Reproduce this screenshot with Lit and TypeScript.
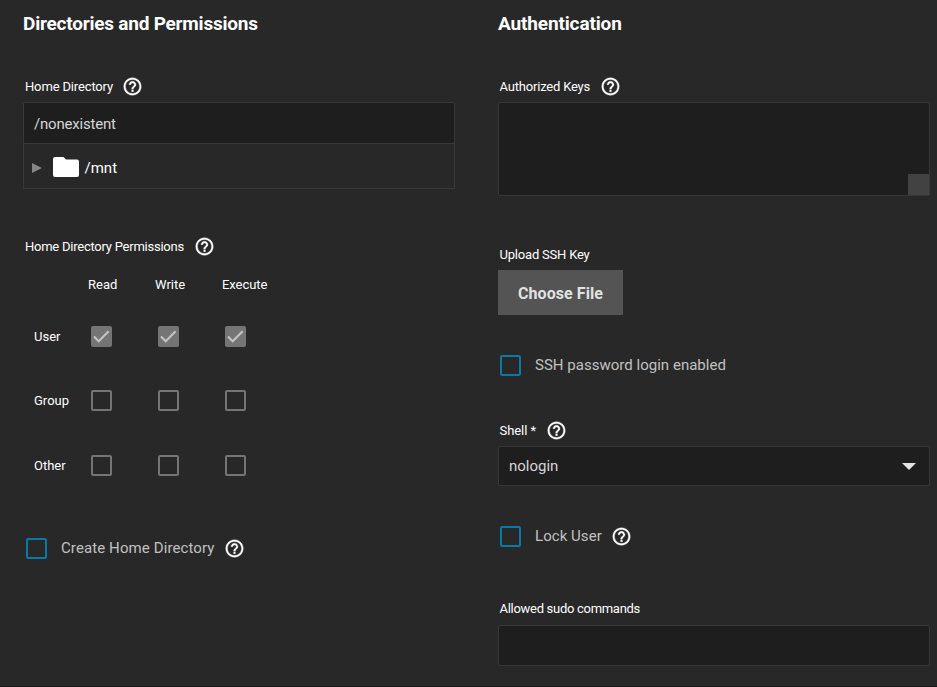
import { LitElement, html, css, svg, nothing } from "lit";
import { customElement, property } from "lit/decorators.js";
import { classMap } from "lit/directives/class-map.js";
import { styleMap } from "lit/directives/style-map.js";

/** Text run with its own tracking, in pixels. */
const tracked = (text: string, tracking = 0) =>
  html`<span class="text" style=${styleMap({ letterSpacing: `${tracking}px` })}>${text}</span>`;

@customElement("help-icon")
export class HelpIcon extends LitElement {
  static styles = css`
    :host { display: block; width: 21px; height: 21px; flex: none; }
    svg { display: block; width: 21px; height: 21px; fill: #fff; stroke: #fff; stroke-width: 0.35; }
  `;
  render() {
    return html`<svg viewBox="0 0 24 24">${svg`<path d="M11 18h2v-2h-2v2zm1-16C6.48 2 2 6.48 2 12s4.48 10 10 10 10-4.48 10-10S17.52 2 12 2zm0 18c-4.41 0-8-3.59-8-8s3.59-8 8-8 8 3.59 8 8-3.59 8-8 8zm0-14c-2.21 0-4 1.79-4 4h2c0-1.1.9-2 2-2s2 .9 2 2c0 2-3 1.75-3 5h2c0-2.25 3-2.5 3-5 0-2.21-1.79-4-4-4z"/>`}</svg>`;
  }
}

@customElement("check-box")
export class CheckBox extends LitElement {
  @property({ type: Boolean }) checked = false;
  @property({ type: Boolean }) accent = false;
  static styles = css`
    :host { display: block; width: 21px; height: 21px; flex: none; }
    .box { box-sizing: border-box; width: 21px; height: 21px; border: 2px solid #757575; border-radius: 2px; }
    .accent { border-color: #0d77a6; }
    .checked { border: 0; background: #757575; }
    svg { display: block; width: 21px; height: 21px; fill: none; stroke: #c4c4c4; stroke-width: 2.1; }
  `;
  render() {
    return html`<div class=${classMap({ box: true, accent: this.accent, checked: this.checked })}>
      ${this.checked ? html`<svg viewBox="0 0 21 21"><path d="M3 10.6 L7.7 15.3 L17.6 5.3" /></svg>` : nothing}
    </div>`;
  }
}

const PERMISSIONS = [
  { who: "User", modes: [true, true, true] },
  { who: "Group", modes: [false, false, false] },
  { who: "Other", modes: [false, false, false] },
];

@customElement("app-root")
export class AppRoot extends LitElement {
  static styles = css`
    :host { display: block; height: 687px; overflow: hidden; box-sizing: border-box; background: #282828;
      border-bottom: 1px solid #1b1b1b; color: #fff; font-family: Roboto, "Liberation Sans", sans-serif; font-size: 13px; }
    .page { display: grid; grid-template-columns: 432px 432px; column-gap: 43px; padding-left: 23px; }
    .col { display: flex; flex-direction: column; }
    h2 { margin: 0; height: 70px; font-size: 19px; font-weight: 700; line-height: 47px; white-space: nowrap; }
    .label { display: flex; align-items: center; height: 32px; padding-left: 2px; white-space: nowrap; }
    .label help-icon { margin: 0 0 0 9px; }
    .right .label { padding-left: 1.5px; }
    .right .label help-icon { margin-left: 9.5px; }
    .field { box-sizing: border-box; border: 1px solid #383838; border-radius: 2px; background: #1e1e1e;
      display: flex; align-items: center; font-size: 15px; color: #d6d6d6; padding: 0 10px; }
    .path { height: 42px; padding-top: 2px; }
    .tree { box-sizing: border-box; height: 46px; margin-top: -1px; border: 1px solid #383838; display: flex; align-items: center;
      padding: 3px 0 0 8px; font-size: 15px; }
    .tree .arrow { width: 10px; height: 10px; fill: #858585; }
    .tree .folder { width: 26px; height: 20px; fill: #fff; margin: -1px 5.5px 0 11px; }
    .perm-label { margin-top: 41px; }
    .perm-label help-icon { margin-left: 10px; }
    .matrix { display: grid; grid-template-columns: 57px 67px 67px 67px; grid-template-rows: 45px 58px 70px 61px;
      align-items: center; padding-left: 11px; }
    .matrix .head { margin: 0 0 0 -3px; }
    .create { margin-top: 42px; }
    .option { display: flex; align-items: center; height: 21px; padding-left: 3px; font-size: 15px; color: #c1c1c1; white-space: nowrap; }
    .option check-box { margin-right: 14px; }
    .option .text { padding-bottom: 2px; }
    .option help-icon { margin: -1px 0 0 9.5px; }
    .right .option { padding-left: 2px; }
    .keys { height: 94px; padding: 0; justify-content: flex-end; align-items: flex-end; }
    .grip { width: 21px; height: 21px; background: #424242; }
    .upload { margin-top: 42px; }
    button { width: 125px; height: 45px; padding: 2px 0 0; border: 0; background: #545454; color: #e2e2e2;
      font: 700 16px Roboto, sans-serif; }
    .password { margin-top: 40px; }
    .shell-label { margin-top: 38px; }
    .shell { height: 40px; justify-content: space-between; padding-right: 13px; }
    .caret { width: 14px; height: 7px; fill: #e4e4e4; }
    .lock { margin-top: 40px; }
    .sudo-label { margin-top: 45px; }
    .sudo { height: 41px; margin-top: 1px; }
  `;

  render() {
    return html`<main class="page">
      <section class="col left">
        <h2>${tracked("Directories and Permissions", -0.22)}</h2>
        <div class="label">${tracked("Home Directory", -0.15)}<help-icon></help-icon></div>
        <div class="field path">${tracked("/nonexistent", -0.2)}</div>
        <div class="tree">
          <svg class="arrow" viewBox="0 0 10 10"><path d="M0 0L10 5L0 10Z" /></svg>
          <svg class="folder" viewBox="0 0 26 20"><path d="M2 0H10.5L13 2.5H24Q26 2.5 26 4.5V18Q26 20 24 20H2Q0 20 0 18V2Q0 0 2 0Z" /></svg>
          ${tracked("/mnt", 0)}
        </div>
        <div class="label perm-label">${tracked("Home Directory Permissions", -0.24)}<help-icon></help-icon></div>
        <div class="matrix">
          <span></span>
          <span class="head">${tracked("Read", 0)}</span>
          <span class="head">${tracked("Write", 0)}</span>
          <span class="head">${tracked("Execute", -0.05)}</span>
          ${PERMISSIONS.map((row) => html`
            ${tracked(row.who)}
            ${row.modes.map((on) => html`<check-box ?checked=${on}></check-box>`)}
          `)}
        </div>
        <div class="option create"><check-box accent></check-box>${tracked("Create Home Directory", 0.1)}<help-icon></help-icon></div>
      </section>
      <section class="col right">
        <h2>${tracked("Authentication", -0.14)}</h2>
        <div class="label">${tracked("Authorized Keys", -0.19)}<help-icon></help-icon></div>
        <div class="field keys"><div class="grip"></div></div>
        <div class="label upload">${tracked("Upload SSH Key", -0.2)}</div>
        <button>${tracked("Choose File", 0.08)}</button>
        <div class="option password"><check-box accent></check-box>${tracked("SSH password login enabled", 0.02)}</div>
        <div class="label shell-label">${tracked("Shell *", -0.05)}<help-icon></help-icon></div>
        <div class="field shell">${tracked("nologin", 0)}<svg class="caret" viewBox="0 0 14 7"><path d="M0 0H14L7 7Z" /></svg></div>
        <div class="option lock"><check-box accent></check-box>${tracked("Lock User", 0.05)}<help-icon></help-icon></div>
        <div class="label sudo-label">${tracked("Allowed sudo commands", -0.29)}</div>
        <div class="field sudo"></div>
      </section>
    </main>`;
  }
}
